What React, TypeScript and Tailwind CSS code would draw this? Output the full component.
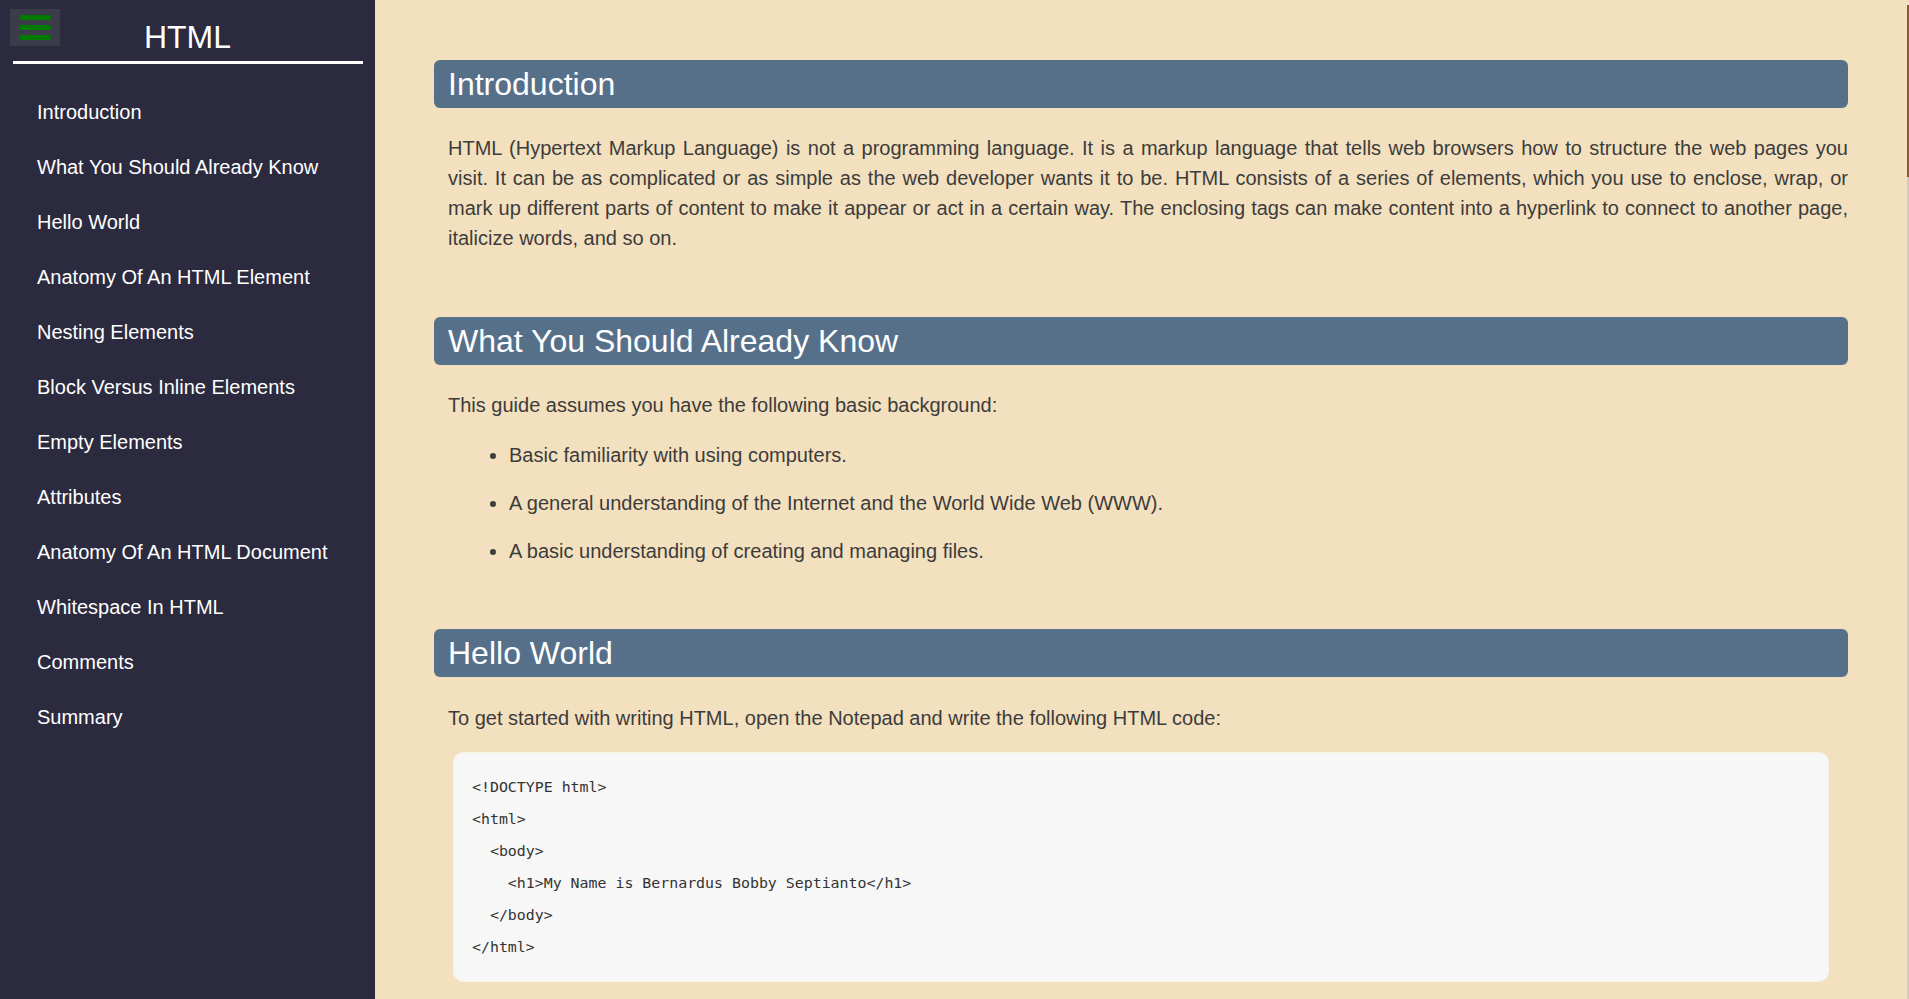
const navItems = [
  "Introduction",
  "What You Should Already Know",
  "Hello World",
  "Anatomy Of An HTML Element",
  "Nesting Elements",
  "Block Versus Inline Elements",
  "Empty Elements",
  "Attributes",
  "Anatomy Of An HTML Document",
  "Whitespace In HTML",
  "Comments",
  "Summary",
];

const codeLines = [
  "<!DOCTYPE html>",
  "<html>",
  "  <body>",
  "    <h1>My Name is Bernardus Bobby Septianto</h1>",
  "  </body>",
  "</html>",
];

function SectionHeading({ children }: { children: React.ReactNode }) {
  return (
    <h2 className="h-[48px] rounded-[6px] bg-[#56708a] pl-[14px] text-[32px] leading-[48px] font-normal text-white">
      {children}
    </h2>
  );
}

function Sidebar() {
  return (
    <aside className="flex w-[375px] shrink-0 flex-col bg-[#2b2a3e]">
      <div className="relative pt-[19px]">
        <button
          type="button"
          aria-label="Menu"
          className="absolute top-[9px] left-[10px] flex h-[37px] w-[50px] flex-col items-center justify-center gap-[5px] bg-[#3c3b4a]"
        >
          <span className="block h-[5px] w-[32px] rounded-full bg-[#007a00]" />
          <span className="block h-[5px] w-[32px] rounded-full bg-[#007a00]" />
          <span className="block h-[5px] w-[32px] rounded-full bg-[#007a00]" />
        </button>
        <h1 className="text-center text-[32px] leading-[36px] text-white">HTML</h1>
        <div className="mt-[6px] mr-[12px] ml-[13px] h-[3px] bg-white" />
      </div>
      <nav className="mt-[20px]">
        <ul>
          {navItems.map((item) => (
            <li key={item} className="flex h-[55px] items-center pl-[37px] text-[20px] text-white">
              <a href="#">{item}</a>
            </li>
          ))}
        </ul>
      </nav>
    </aside>
  );
}

export default function App() {
  return (
    <div
      className="flex h-[999px] w-full overflow-hidden bg-[#f3e0be]"
      style={{ fontFamily: '"Liberation Sans", Arial, sans-serif' }}
    >
      <Sidebar />
      <main className="min-w-0 flex-1 px-[59px] pt-[60px] text-[20px] text-[#3c3c3c]">
        <section>
          <SectionHeading>Introduction</SectionHeading>
          <p className="mt-[25px] pl-[14px] text-justify leading-[30px]">
            HTML (Hypertext Markup Language) is not a programming language. It is a markup language
            that tells web browsers how to structure the web pages you visit. It can be as
            complicated or as simple as the web developer wants it to be. HTML consists of a series
            of elements, which you use to enclose, wrap, or mark up different parts of content to
            make it appear or act in a certain way. The enclosing tags can make content into a
            hyperlink to connect to another page, italicize words, and so on.
          </p>
        </section>

        <section className="mt-[64px]">
          <SectionHeading>What You Should Already Know</SectionHeading>
          <p className="mt-[25px] pl-[14px] leading-[30px]">
            This guide assumes you have the following basic background:
          </p>
          <ul className="mt-[11px] list-disc pl-[75px]">
            <li className="py-[9px] leading-[30px]">Basic familiarity with using computers.</li>
            <li className="py-[9px] leading-[30px]">
              A general understanding of the Internet and the World Wide Web (WWW).
            </li>
            <li className="py-[9px] leading-[30px]">A basic understanding of creating and managing files.</li>
          </ul>
        </section>

        <section className="mt-[54px]">
          <SectionHeading>Hello World</SectionHeading>
          <p className="mt-[26px] pl-[14px] leading-[30px]">
            To get started with writing HTML, open the Notepad and write the following HTML code:
          </p>
          <div className="mt-[19px] mr-[19px] ml-[19px] rounded-[10px] border border-[#faf2e2] bg-[#f7f7f7] pt-[18px] pr-[16px] pb-[18px] pl-[18px]">
            <pre
              className="text-[14.9px] leading-[32px] text-[#333]"
              style={{ fontFamily: '"DejaVu Sans Mono", "Liberation Mono", monospace' }}
            >
              {codeLines.join("\n")}
            </pre>
          </div>
        </section>
      </main>
      <div className="flex w-[2px] shrink-0 flex-col pt-[5px]">
        <div className="flex flex-1 flex-col bg-[#cfcbc3]">
          <div className="h-[172px] bg-[#8b5a2b]" />
        </div>
      </div>
    </div>
  );
}
